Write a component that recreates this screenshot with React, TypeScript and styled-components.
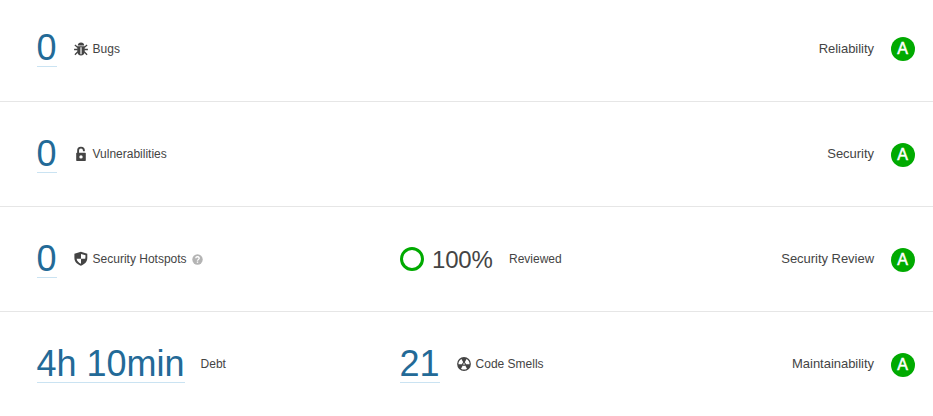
import React from 'react';
import styled, { createGlobalStyle } from 'styled-components';

const GlobalStyle = createGlobalStyle`
  body {
    margin: 0;
    background: #fff;
    color: #444;
    font-family: "Liberation Sans", Arial, sans-serif;
    font-size: 12px;
    line-height: 16px;
  }
`;

const Panel = styled.main`
  display: grid;
  grid-template-rows: 102px 105px 105px 104px;
  overflow: hidden;
`;

const Measure = styled.div`
  display: flex;
  align-items: flex-start;
`;

const Value = styled.a`
  height: 42px;
  border-bottom: 1px solid #cae3f2;
  color: #236a97;
  font-size: 36px;
  line-height: 48px;
  text-indent: -0.5px;
  white-space: nowrap;
`;

const Label = styled.span<{ $icon?: boolean }>`
  display: flex;
  align-items: center;
  height: 16px;
  margin: 16px 0 0 ${p => (p.$icon ? 17 : 16)}px;
  white-space: nowrap;

  > svg {
    flex: none;
  }
`;

const LabelText = styled.span`
  margin-left: 4px;
`;

const Help = styled.svg`
  margin-left: 5px;
`;

const Ring = styled.span`
  box-sizing: border-box;
  width: 24px;
  height: 24px;
  margin-top: 12px;
  border: 3px solid #0a0;
  border-radius: 50%;
`;

const Percent = styled.span`
  width: 61px;
  margin: 11px 0 0 8px;
  font-size: 24px;
  line-height: 28px;
  letter-spacing: -0.2px;
`;

const Rating = styled.div`
  display: flex;
  align-items: flex-start;
  padding-top: 13px;
  font-size: 13px;
`;

const RatingName = styled.span`
  margin-top: 3px;
  letter-spacing: -0.03px;
`;

const Badge = styled.span`
  box-sizing: border-box;
  width: 24px;
  height: 24px;
  margin-left: 17px;
  padding-right: 1px;
  border-radius: 50%;
  background: #0a0;
  color: #fff;
  font-size: 16px;
  line-height: 24px;
  text-align: center;
  -webkit-text-stroke: 0.5px #fff;
`;

const Row = styled.section<{ $first?: boolean }>`
  display: grid;
  grid-template-columns: 363px 1fr auto;
  align-items: start;
  box-sizing: border-box;
  padding: ${p => (p.$first ? 24 : 28)}px 18px 0 37px;
  border-bottom: 1px solid #e6e6e6;

  &:last-child {
    border-bottom: 0;
  }

  ${Label} {
    margin-top: ${p => (p.$first ? 17 : 16)}px;
  }

  ${RatingName} {
    margin-top: ${p => (p.$first ? 4 : 3)}px;
  }
`;

const BugIcon = () => (
  <svg width="15" height="16" viewBox="0 0 15 16">
    <path fill="#444" d="M3.700 4.600C4 2.400 5 1.400 7 1.400s3 1 3.300 3.200z" />
    <path
      fill="#444"
      fillRule="evenodd"
      d="M3.300 5.200h7.400v5.600c0 2.200-1.600 3.700-3.700 3.700s-3.700-1.500-3.700-3.700zM6.400 6.300v7h1.200v-7z"
    />
    <path
      fill="none"
      stroke="#444"
      strokeWidth="1.300"
      d="M3.800 6.400.9 3.900M10.200 6.400 13.100 3.900M3.800 8.500H.1M10.200 8.500h3.700M3.800 10.800.9 13.700M10.200 10.800l2.900 2.900"
    />
  </svg>
);

const LockIcon = () => (
  <svg width="15" height="16" viewBox="0 0 15 16">
    <path fill="none" stroke="#444" strokeWidth="1.900" d="M4.100 7.300V4.600a2.900 2.900 0 0 1 5.800-.2v.9" />
    <path
      fill="#444"
      fillRule="evenodd"
      d="M2.800 6.700h8.400c.4 0 .6.2.6.6v7c0 .4-.2.7-.6.7H2.800c-.4 0-.6-.3-.6-.7v-7c0-.4.2-.6.6-.6zM7 9.200a1.700 1.700 0 1 0 0 3.400 1.700 1.700 0 0 0 0-3.400z"
    />
  </svg>
);

const ShieldIcon = () => (
  <svg width="15" height="16" viewBox="0 0 15 16">
    <path
      fill="#444"
      fillRule="evenodd"
      d="M6.900.8 13.300 2.700V7c0 4-3.200 6.500-6.400 7.800C3.700 13.500.4 11 .4 7V2.700zM7 3V7.700h4.200c.3-1.100.3-2.200.3-3.400zM7 7.700H2.600C3 10 4.800 11.800 7 12.800z"
    />
  </svg>
);

const blade = 'M5.800 6.400 4 3.300Q7 1.500 10 3.300L8.200 6.400Q7 5.800 5.800 6.400z';

const SmellIcon = () => (
  <svg width="15" height="16" viewBox="0 0 15 16">
    <circle cx="7" cy="8" r="6.900" fill="#444" />
    <g fill="#fff">
      <path d={blade} transform="rotate(60 7 8)" />
      <path d={blade} transform="rotate(180 7 8)" />
      <path d={blade} transform="rotate(300 7 8)" />
      <circle cx="7" cy="8" r=".8" />
    </g>
  </svg>
);

const HelpIcon = () => (
  <Help width="11" height="11" viewBox="0 0 11 11">
    <circle cx="5.500" cy="5.500" r="5.200" fill="#b4b4b4" />
    <path fill="none" stroke="#fff" strokeWidth="1.400" d="M3.800 4.300a1.700 1.500 0 1 1 2.600 1.200c-.6.4-.9.6-.9 1.300" />
    <path fill="#fff" d="M4.800 7.500h1.400v1.300H4.800z" />
  </Help>
);

const RatingCell = ({ name }: { name: string }) => (
  <Rating>
    <RatingName>{name}</RatingName>
    <Badge>A</Badge>
  </Rating>
);

export default function App() {
  return (
    <>
      <GlobalStyle />
      <Panel>
        <Row $first>
          <Measure>
            <Value>0</Value>
            <Label $icon><BugIcon /><LabelText>Bugs</LabelText></Label>
          </Measure>
          <Measure />
          <RatingCell name="Reliability" />
        </Row>
        <Row>
          <Measure>
            <Value>0</Value>
            <Label $icon><LockIcon /><LabelText>Vulnerabilities</LabelText></Label>
          </Measure>
          <Measure />
          <RatingCell name="Security" />
        </Row>
        <Row>
          <Measure>
            <Value>0</Value>
            <Label $icon><ShieldIcon /><LabelText>Security Hotspots</LabelText><HelpIcon /></Label>
          </Measure>
          <Measure>
            <Ring />
            <Percent>100%</Percent>
            <Label>Reviewed</Label>
          </Measure>
          <RatingCell name="Security Review" />
        </Row>
        <Row>
          <Measure>
            <Value>4h 10min</Value>
            <Label>Debt</Label>
          </Measure>
          <Measure>
            <Value>21</Value>
            <Label $icon><SmellIcon /><LabelText>Code Smells</LabelText></Label>
          </Measure>
          <RatingCell name="Maintainability" />
        </Row>
      </Panel>
    </>
  );
}
